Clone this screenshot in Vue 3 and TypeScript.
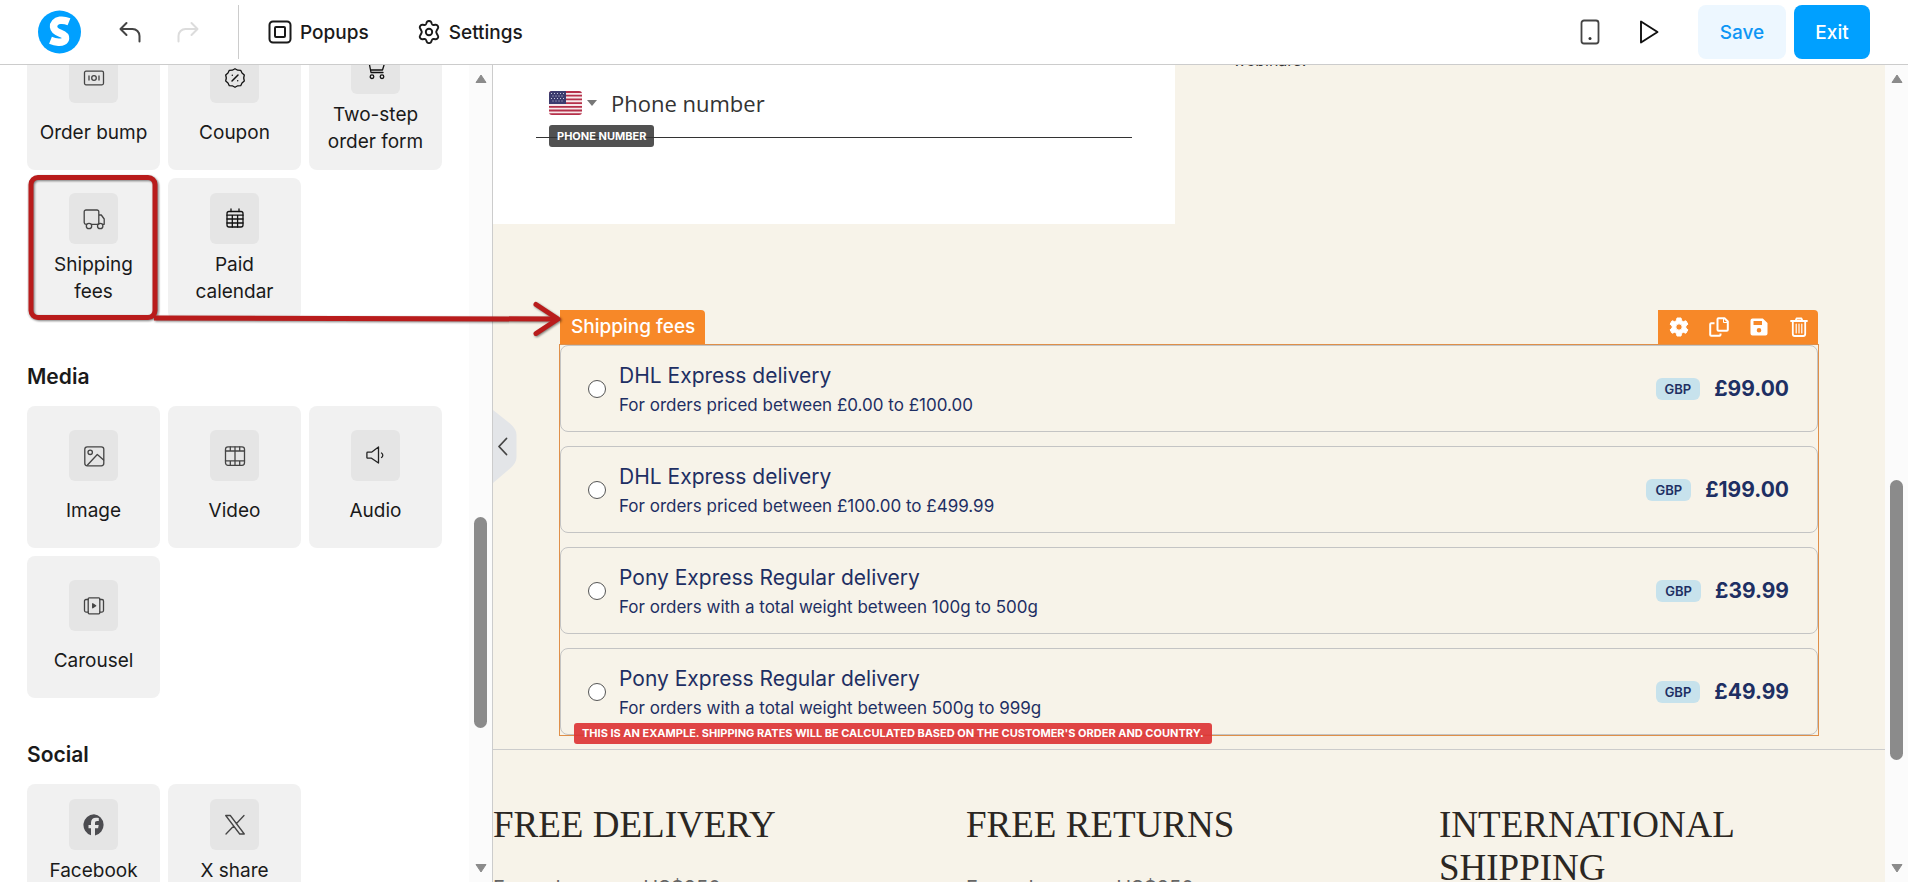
<script setup lang="ts">
import { ref } from 'vue'

interface Tile {
  label: string
  icon: string
  tall?: boolean
  marked?: boolean
}
interface Section {
  title: string
  tiles: Tile[]
}
interface Rate {
  id: string
  name: string
  rule: string
  currency: string
  price: string
}
interface Perk {
  title: string
  text: string
}

const sections: Section[] = [
  {
    title: '',
    tiles: [
      { label: 'Order bump', icon: 'bump' },
      { label: 'Coupon', icon: 'coupon' },
      { label: 'Two-step order form', icon: 'cart' },
      { label: 'Shipping fees', icon: 'truck', marked: true },
      { label: 'Paid calendar', icon: 'calendar' },
    ],
  },
  {
    title: 'Media',
    tiles: [
      { label: 'Image', icon: 'image' },
      { label: 'Video', icon: 'video' },
      { label: 'Audio', icon: 'audio' },
      { label: 'Carousel', icon: 'carousel' },
    ],
  },
  {
    title: 'Social',
    tiles: [
      { label: 'Facebook', icon: 'facebook', tall: true },
      { label: 'X share', icon: 'x', tall: true },
    ],
  },
]

const rates: Rate[] = [
  { id: 'dhl-1', name: 'DHL Express delivery', rule: 'For orders priced between £0.00 to £100.00', currency: 'GBP', price: '£99.00' },
  { id: 'dhl-2', name: 'DHL Express delivery', rule: 'For orders priced between £100.00 to £499.99', currency: 'GBP', price: '£199.00' },
  { id: 'pony-1', name: 'Pony Express Regular delivery', rule: 'For orders with a total weight between 100g to 500g', currency: 'GBP', price: '£39.99' },
  { id: 'pony-2', name: 'Pony Express Regular delivery', rule: 'For orders with a total weight between 500g to 999g', currency: 'GBP', price: '£49.99' },
]

const perks: Perk[] = [
  { title: 'FREE DELIVERY', text: 'For orders over US$250' },
  { title: 'FREE RETURNS', text: 'For orders over US$250' },
  { title: 'INTERNATIONAL SHIPPING', text: '' },
]

const selected = ref<string>('')
const phone = ref<string>('')
</script>

<template>
  <div class="editor">
    <header class="topbar">
      <a class="logo" href="#" aria-label="Home">
        <svg viewBox="0 0 44 44" width="44" height="44">
          <circle cx="21.500" cy="22" r="21.500" fill="#00a0ff" />
          <path d="M31 11.700C27.500 10.300 24.500 9.900 22 10.300C17.500 11 15.300 13.800 15.600 17C16 20.500 19 22 22.300 23.200C25.500 24.400 27.800 25.500 27.500 28.300C27.200 31.200 24 32.600 20.500 32.300C17.500 32 15 31.300 12.500 30.300" fill="none" stroke="#fff" stroke-width="7.500" />
        </svg>
      </a>
      <button class="icon-btn undo" type="button" aria-label="Undo">
        <svg viewBox="0 0 24 24" width="24" height="24" fill="none" stroke="#444" stroke-width="2" stroke-linecap="round" stroke-linejoin="round">
          <path d="M8.500 3 2.500 9l6 6M3 9h11.500a7 7 0 0 1 7 7v5.500" />
        </svg>
      </button>
      <button class="icon-btn redo" type="button" aria-label="Redo" disabled>
        <svg viewBox="0 0 24 24" width="24" height="24" fill="none" stroke="#dcdcdc" stroke-width="2" stroke-linecap="round" stroke-linejoin="round">
          <path d="m15.500 3 6 6-6 6M21 9H9.500a7 7 0 0 0-7 7v5.500" />
        </svg>
      </button>
      <span class="rule"></span>
      <button class="menu-btn popups" type="button">
        <svg viewBox="0 0 24 24" width="24" height="24" fill="none" stroke="#1a1a1a" stroke-width="2" stroke-linejoin="round">
          <rect x="1.500" y="1.500" width="21" height="21" rx="3.500" />
          <rect x="7" y="7" width="10" height="10" rx="1" />
        </svg>
        <span>Popups</span>
      </button>
      <button class="menu-btn settings" type="button">
        <svg viewBox="0 0 24 24" width="24" height="24" fill="none" stroke="#1a1a1a" stroke-width="1.900" stroke-linejoin="round">
          <path d="M9.800 2.200C10.500.500 13.500.500 14.200 2.200L14.900 4C15.200 4.700 15.900 5.100 16.600 5L18.600 4.700C20.500 4.500 21.900 7 20.800 8.500L19.600 10.800C19.200 11.500 19.200 12.500 19.600 13.200L20.800 15.500C21.900 17 20.500 19.500 18.600 19.300L16.600 19C15.900 18.900 15.200 19.300 14.900 20L14.200 21.800C13.500 23.500 10.500 23.500 9.800 21.800L9.100 20C8.800 19.300 8.100 18.900 7.400 19L5.400 19.300C3.500 19.500 2.100 17 3.200 15.500L4.400 13.200C4.800 12.500 4.800 11.500 4.400 10.800L3.200 8.500C2.100 7 3.500 4.500 5.400 4.700L7.400 5C8.100 5.100 8.800 4.700 9.100 4Z" />
          <circle cx="12" cy="12" r="3.200" />
        </svg>
        <span>Settings</span>
      </button>
      <span class="spacer"></span>
      <button class="icon-btn device" type="button" aria-label="Mobile view">
        <svg viewBox="0 0 24 26" width="24" height="26" fill="none" stroke="#444" stroke-width="1.800">
          <rect x="3.500" y="1.500" width="17" height="23" rx="2.500" />
          <circle cx="12" cy="19.500" r="1.500" fill="#333" stroke="none" />
        </svg>
      </button>
      <button class="icon-btn preview" type="button" aria-label="Preview">
        <svg viewBox="0 0 24 26" width="24" height="26" fill="none" stroke="#111" stroke-width="1.900" stroke-linejoin="round">
          <path d="M5 2.500v21L21.500 13Z" />
        </svg>
      </button>
      <button class="btn save" type="button">Save</button>
      <button class="btn exit" type="button">Exit</button>
    </header>

    <div class="body">
      <aside class="sidebar">
        <div class="library">
          <section v-for="section in sections" :key="section.title" class="group">
            <h2 v-if="section.title">{{ section.title }}</h2>
            <div class="tiles">
              <button v-for="tile in section.tiles" :key="tile.label" type="button" class="tile" :class="{ tall: tile.tall }">
                <span class="tile-icon">
                  <svg viewBox="0 0 22 22" width="22" height="22" fill="none" stroke="#444" stroke-width="1.300" stroke-linecap="round" stroke-linejoin="round">
                    <template v-if="tile.icon === 'bump'">
                      <rect x="1.500" y="4.200" width="19" height="13.600" rx="1.500" />
                      <circle cx="11" cy="11" r="2.300" />
                      <path d="M6 9v4M16 9v4" />
                    </template>
                    <template v-else-if="tile.icon === 'coupon'">
                      <path stroke="#111" d="M11 1.700 13.700 3.200 16.700 3.300 18 6 20.300 8 19.700 11 20.300 14 18 16 16.700 18.700 13.700 18.800 11 20.300 8.300 18.800 5.300 18.700 4 16 1.700 14 2.300 11 1.700 8 4 6 5.300 3.300 8.300 3.200Z" />
                      <path stroke="#111" d="m8 14 6-6M8.300 8.200v.1M13.700 13.700v.1" stroke-width="1.500" />
                    </template>
                    <template v-else-if="tile.icon === 'cart'">
                      <g stroke="#111">
                        <path d="M1 1.500h2.500L6 14.500h12M4.500 5.500H19.500L17.500 12H5.800" />
                        <circle cx="7" cy="18.700" r="1.800" />
                        <circle cx="17" cy="18.700" r="1.800" />
                      </g>
                    </template>
                    <template v-else-if="tile.icon === 'truck'">
                      <path d="M3.700 16.300H3A1.800 1.800 0 0 1 1.200 14.500V3.800A1.800 1.800 0 0 1 3 2H14a1.800 1.800 0 0 1 1.800 1.800v12.500M8.500 16.300h6.300M15.800 7h2.500l2.900 4v5.300h-1.500" />
                      <circle cx="6" cy="18" r="2.700" />
                      <circle cx="17.200" cy="18" r="2.700" />
                    </template>
                    <template v-else-if="tile.icon === 'calendar'">
                      <g stroke="#111">
                        <rect x="3" y="3.500" width="16" height="15.500" rx="2" />
                        <path d="M3 7.200h16M3 11h16M3 15h16M8.300 7.200V19M13.600 7.200V19M7 1v2.500M15 1v2.500" />
                      </g>
                    </template>
                    <template v-else-if="tile.icon === 'image'">
                      <rect x="1.800" y="1.800" width="19" height="19" rx="2.500" />
                      <circle cx="7.200" cy="7.300" r="2.200" />
                      <path d="m4.500 20 9.800-10.500 6.300 5.500" />
                    </template>
                    <template v-else-if="tile.icon === 'video'">
                      <rect x="1.500" y="1.800" width="19" height="18.500" rx="2.500" />
                      <path d="M1.500 6h19M1.500 15.800h19M11 1.800v18.500M6.300 1.800V6M15.700 1.800V6M6.300 15.800v4.500M15.700 15.800v4.500" />
                    </template>
                    <template v-else-if="tile.icon === 'audio'">
                      <path stroke="#222" d="M2.700 7.200h3.800L13.500 2v16l-7-4.800H2.700a.8.800 0 0 1-.8-.8V8a.8.800 0 0 1 .8-.8ZM16.500 8c1.700 1 1.700 3.700 0 4.500" />
                    </template>
                    <template v-else-if="tile.icon === 'carousel'">
                      <rect x="5.200" y="2.800" width="11.600" height="16" rx="1" />
                      <path d="M5.200 4.500H3A1.500 1.500 0 0 0 1.500 6v9.600A1.500 1.500 0 0 0 3 17.100H5.200M16.800 4.500H19A1.500 1.500 0 0 1 20.500 6v9.600a1.500 1.500 0 0 1-1.500 1.500H16.800" />
                      <path d="M9.700 8.800v4l3-2Z" fill="#444" />
                    </template>
                    <template v-else-if="tile.icon === 'facebook'">
                      <path stroke="none" fill="#4c4c50" d="M11 .200A10.800 10.800 0 0 0 8 21.300V14.200H5.500V11H8V9C8 5.500 9.800 3.800 13 3.800c.9 0 1.900.1 2.800.3V7h-1.600c-1.600 0-2.200.7-2.200 2v2h3.700l-.6 3.200H12v7.300A10.800 10.800 0 0 0 11 .200Z" />
                    </template>
                    <template v-else>
                      <path d="M1.700 1.500h4.600l14 18.500h-4.600ZM20 1.500 12.300 9.700M9.700 12 2 20" />
                    </template>
                  </svg>
                </span>
                <span class="tile-label">{{ tile.label }}</span>
                <svg v-if="tile.marked" class="callout" viewBox="0 0 544 168" width="544" height="168" fill="none" stroke="#b91c1c" stroke-width="5" stroke-linejoin="round">
                  <rect x="14" y="9.500" width="124" height="140" rx="7" />
                  <path d="M137 150 541 151" />
                  <path d="M519 136.500 541 151 519 165.500" stroke-linecap="round" />
                </svg>
              </button>
            </div>
          </section>
        </div>
        <div class="scrollbar side">
          <svg viewBox="0 0 12 10" width="12" height="10"><path d="M6 1 11 8.500H1Z" fill="#8b8b8b" stroke="#8b8b8b" stroke-linejoin="round" /></svg>
          <span class="thumb"></span>
          <svg viewBox="0 0 12 10" width="12" height="10"><path d="M6 9 11 1.500H1Z" fill="#8b8b8b" stroke="#8b8b8b" stroke-linejoin="round" /></svg>
        </div>
      </aside>

      <main class="canvas">
        <button class="collapse" type="button" aria-label="Collapse panel">
          <svg viewBox="0 0 24 74" width="24" height="74">
            <path d="M0 0 17 13.500Q23.500 19 23.500 25V47Q23.500 53 17 58.500L0 73Z" fill="#e3e5e8" />
            <path d="M13.500 28.500 6 36.500l7.500 8" fill="none" stroke="#444" stroke-width="1.800" stroke-linecap="round" stroke-linejoin="round" />
          </svg>
        </button>
        <div class="page">
          <section class="hero">
            <form class="order-card" @submit.prevent>
              <div class="phone-row">
                <button class="country" type="button" aria-label="Country code">
                  <svg viewBox="0 0 33 24" width="33" height="24">
                    <defs><clipPath id="flag-clip"><rect width="33" height="24" rx="3" /></clipPath></defs>
                    <g clip-path="url(#flag-clip)">
                      <rect width="33" height="24" fill="#f7e8ea" />
                      <path d="M0 1h33M0 4.700h33M0 8.400h33M0 12.100h33M0 15.800h33M0 19.500h33M0 23.200h33" stroke="#b5304a" stroke-width="1.800" />
                      <rect width="17" height="13" fill="#3c3b6e" />
                      <path d="M2 2.500h14M3.500 5h12M2 7.500h14M3.500 10h12" stroke="#c9c9dd" stroke-dasharray="1 2" />
                    </g>
                  </svg>
                  <svg viewBox="0 0 10 6" width="10" height="6"><path d="M0 0h10L5 6Z" fill="#777" /></svg>
                </button>
                <input v-model="phone" type="tel" placeholder="Phone number" aria-label="Phone number" />
                <span class="field-tag">PHONE NUMBER</span>
              </div>
            </form>
            <p class="blurb">webinars.</p>
          </section>

          <section class="shipping">
            <div class="handle">
              <span class="handle-name">Shipping fees</span>
              <div class="tools">
                <button type="button" aria-label="Settings">
                  <svg viewBox="0 0 20 20" width="20" height="20">
                    <path fill-rule="evenodd" fill="#fff" stroke="#fff" stroke-width="1" stroke-linejoin="round" d="M8 1h4l.6 2.700 1.700 1 2.600-.9 2 3.400-2.100 1.800v2l2.100 1.800-2 3.400-2.600-.9-1.700 1L12 19H8l-.6-2.700-1.700-1-2.600.9-2-3.400L3.200 11V9L1.100 7.200l2-3.400 2.600.9 1.700-1ZM10 6.800a3.200 3.200 0 1 0 0 6.400 3.200 3.200 0 0 0 0-6.400Z" />
                  </svg>
                </button>
                <button type="button" aria-label="Duplicate">
                  <svg viewBox="0 0 20 20" width="20" height="20" fill="none" stroke="#fff" stroke-width="2" stroke-linejoin="round">
                    <path d="M9.500 1.200h6l3.300 3.300v8.300a1 1 0 0 1-1 1H9.500a1 1 0 0 1-1-1V2.200a1 1 0 0 1 1-1ZM5.500 6.200H2.200a1 1 0 0 0-1 1V17.800a1 1 0 0 0 1 1H10.500a1 1 0 0 0 1-1V16.500" />
                    <path d="M14.500 1v4.500H19" stroke-width="1" />
                  </svg>
                </button>
                <button type="button" aria-label="Save block">
                  <svg viewBox="0 0 20 20" width="20" height="20">
                    <path fill="#fff" fill-rule="evenodd" d="M3.500 1.500h10.300L18.500 6v10.500a2 2 0 0 1-2 2h-13a2 2 0 0 1-2-2v-13a2 2 0 0 1 2-2ZM4.500 4v4h8.500V4ZM10 11a2.300 2.300 0 1 0 0 4.600 2.300 2.300 0 0 0 0-4.600Z" />
                  </svg>
                </button>
                <button type="button" aria-label="Delete">
                  <svg viewBox="0 0 20 20" width="20" height="20" fill="none" stroke="#fff" stroke-width="1.800" stroke-linejoin="round" stroke-linecap="round">
                    <path d="M2 4h16M6.500 4 7.500 1.500h5L13.500 4M3.800 4v13a2 2 0 0 0 2 2h8.400a2 2 0 0 0 2-2V4" />
                    <path d="M7.200 7v9M10 7v9M12.800 7v9" stroke-width="1.200" />
                  </svg>
                </button>
              </div>
            </div>
            <div class="frame">
              <label v-for="rate in rates" :key="rate.id" class="rate">
                <input v-model="selected" type="radio" name="rate" :value="rate.id" />
                <span class="rate-text">
                  <span class="rate-name">{{ rate.name }}</span>
                  <span class="rate-rule">{{ rate.rule }}</span>
                </span>
                <span class="currency">{{ rate.currency }}</span>
                <strong class="price">{{ rate.price }}</strong>
              </label>
              <span class="notice">THIS IS AN EXAMPLE. SHIPPING RATES WILL BE CALCULATED BASED ON THE CUSTOMER'S ORDER AND COUNTRY.</span>
            </div>
          </section>

          <section class="perks">
            <article v-for="perk in perks" :key="perk.title">
              <h3>{{ perk.title }}</h3>
              <p v-if="perk.text">{{ perk.text }}</p>
            </article>
          </section>
        </div>
        <div class="scrollbar main">
          <svg viewBox="0 0 12 10" width="12" height="10"><path d="M6 1 11 8.500H1Z" fill="#8b8b8b" stroke="#8b8b8b" stroke-linejoin="round" /></svg>
          <span class="thumb"></span>
          <svg viewBox="0 0 12 10" width="12" height="10"><path d="M6 9 11 1.500H1Z" fill="#8b8b8b" stroke="#8b8b8b" stroke-linejoin="round" /></svg>
        </div>
      </main>
    </div>
  </div>
</template>

<style>
body {
  margin: 0;
  overflow: hidden;
}
</style>

<style scoped>
* {
  box-sizing: border-box;
}
.editor {
  display: flex;
  flex-direction: column;
  height: 100vh;
  overflow: hidden;
  font-family: Inter, "Liberation Sans", sans-serif;
  color: #1a1a1a;
  background: #fff;
}
button {
  padding: 0;
  border: 0;
  background: none;
  font: inherit;
  color: inherit;
}
svg {
  display: block;
  flex: none;
}

/* Top bar */
.topbar {
  display: flex;
  align-items: center;
  flex: none;
  height: 65px;
  padding: 0 38px;
  border-bottom: 1px solid #ccc;
}
.undo {
  margin-left: 36px;
}
.redo {
  margin-left: 34px;
}
.rule {
  width: 1px;
  height: 54px;
  margin-left: 38px;
  background: #ccc;
}
.menu-btn {
  display: flex;
  align-items: center;
  gap: 8px;
  font-size: 19px;
  font-weight: 500;
}
.popups {
  margin-left: 29px;
}
.settings {
  margin-left: 48px;
}
.spacer {
  flex: 1;
}
.preview {
  margin-left: 34px;
}
.btn {
  height: 54px;
  border-radius: 8px;
  font-size: 19px;
  font-weight: 500;
}
.save {
  width: 88px;
  margin-left: 38px;
  background: #edf7ff;
  color: #0d96f5;
}
.exit {
  width: 76px;
  margin-left: 8px;
  background: #00a0ff;
  color: #fff;
}

/* Element library */
.body {
  display: flex;
  flex: 1;
  min-height: 0;
  overflow: hidden;
}
.sidebar {
  display: flex;
  flex: none;
  width: 493px;
  border-right: 1px solid #ccc;
}
.library {
  flex: 1;
  padding: 0 27px;
}
.group:first-child {
  margin-top: -37px;
}
.group h2 {
  margin: 0;
  padding: 42px 0 14px;
  font-size: 21px;
  font-weight: 600;
  line-height: 30px;
}
.tiles {
  display: grid;
  grid-template-columns: repeat(3, 133px);
  gap: 8px;
}
.tile {
  position: relative;
  display: flex;
  flex-direction: column;
  align-items: center;
  justify-content: space-evenly;
  height: 142px;
  padding: 8px 0;
  border-radius: 8px;
  background: #f1f1f1;
}
.tile-icon {
  display: flex;
  align-items: center;
  justify-content: center;
  width: 49px;
  height: 51px;
  border-radius: 6px;
  background: #e5e5e5;
}
.tile-label {
  max-width: 112px;
  font-size: 19px;
  line-height: 27px;
}
.tall .tile-label {
  min-height: 54px;
}
.callout {
  position: absolute;
  z-index: 5;
  top: -10px;
  left: -10px;
  overflow: visible;
  filter: drop-shadow(1px 1px 1px rgba(0, 0, 0, 0.5));
  pointer-events: none;
}

/* Scrollbars */
.scrollbar {
  display: flex;
  flex-direction: column;
  align-items: center;
  justify-content: space-between;
  flex: none;
  width: 23px;
  padding: 9px 0;
  background: #fbfbfb;
}
.thumb {
  width: 13px;
  border-radius: 7px;
  background: #8b8b8b;
}
.side .thumb {
  height: 211px;
  margin-top: 298px;
}
.main .thumb {
  height: 280px;
  margin-top: 293px;
}

/* Page canvas */
.canvas {
  position: relative;
  display: flex;
  flex: 1;
  min-width: 0;
}
.collapse {
  position: absolute;
  top: 345px;
  left: 0;
}
.page {
  flex: 1;
  min-width: 0;
  overflow: hidden;
  background: #f7f3e9;
}
.hero {
  display: flex;
  height: 159px;
}
.order-card {
  width: 49%;
  padding: 4px 43px 0;
  background: #fff;
}
.phone-row {
  position: relative;
  display: flex;
  align-items: center;
  height: 69px;
  padding: 0 13px;
  border-bottom: 1px solid #333;
}
.country {
  display: flex;
  align-items: center;
  gap: 5px;
}
.phone-row input {
  flex: 1;
  min-width: 0;
  height: 40px;
  margin-left: 14px;
  padding: 0;
  border: 0;
  outline: 0;
  background: none;
  font: 22px "Open Sans", sans-serif;
  color: #333;
}
.phone-row input::placeholder {
  color: #333;
  opacity: 1;
}
.field-tag {
  position: absolute;
  top: 56px;
  left: 13px;
  padding: 0 8px;
  border-radius: 3px;
  background: rgba(51, 51, 51, 0.85);
  font-size: 11px;
  font-weight: 700;
  line-height: 22px;
  color: #fff;
}
.blurb {
  margin: -16px 0 0 58px;
  font-size: 16px;
  line-height: 22px;
  color: #333;
}

/* Shipping block */
.shipping {
  padding: 86px 66px 13px;
  border-bottom: 1px solid #ccc;
}
.handle {
  display: flex;
  justify-content: space-between;
  height: 34px;
  margin: 0 1px;
}
.handle-name {
  padding: 0 10px 0 11px;
  border-top-right-radius: 4px;
  background: #f78828;
  font-size: 19px;
  font-weight: 500;
  line-height: 34px;
  color: #fff;
}
.tools {
  display: flex;
  align-items: center;
  gap: 20px;
  padding: 0 9px 0 11px;
  border-top-right-radius: 4px;
  background: #f78828;
}
.frame {
  position: relative;
  display: flex;
  flex-direction: column;
  gap: 14px;
  border: 1px solid #df8f49;
}
.rate {
  display: flex;
  align-items: center;
  height: 87px;
  padding: 0 28px 0 27px;
  border: 1px solid #c4c4c4;
  border-radius: 8px;
  color: #1e2f63;
}
.rate input {
  appearance: none;
  flex: none;
  width: 18px;
  height: 18px;
  margin: 0;
  border: 1px solid #555;
  border-radius: 50%;
  background: #fff;
}
.rate input:checked {
  border-width: 5px;
}
.rate-text {
  display: flex;
  flex: 1;
  flex-direction: column;
  gap: 2px;
  margin-left: 13px;
}
.rate-name {
  font-size: 21px;
  line-height: 31px;
}
.rate-rule {
  font-size: 17px;
  line-height: 25px;
}
.currency {
  padding: 0 9px;
  border-radius: 6px;
  background: #c7e2ec;
  font-size: 13px;
  font-weight: 600;
  line-height: 22px;
}
.price {
  margin-left: 14px;
  font-size: 21px;
  font-weight: 700;
}
.notice {
  position: absolute;
  bottom: -9px;
  left: 14px;
  padding: 0 8px;
  border-radius: 3px;
  background: rgba(220, 53, 53, 0.92);
  font-size: 11px;
  font-weight: 700;
  line-height: 21px;
  white-space: nowrap;
  color: #fff;
}

/* Perks */
.perks {
  display: grid;
  grid-template-columns: repeat(3, 1fr);
  gap: 27px;
  padding-top: 53px;
}
.perks h3 {
  margin: 0;
  font-family: "Liberation Serif", serif;
  font-size: 37px;
  font-weight: 400;
  line-height: 43px;
  color: #2b2723;
}
.perks p {
  margin: 27px 0 0;
  font-size: 20px;
  line-height: 30px;
  color: #666;
}
</style>
